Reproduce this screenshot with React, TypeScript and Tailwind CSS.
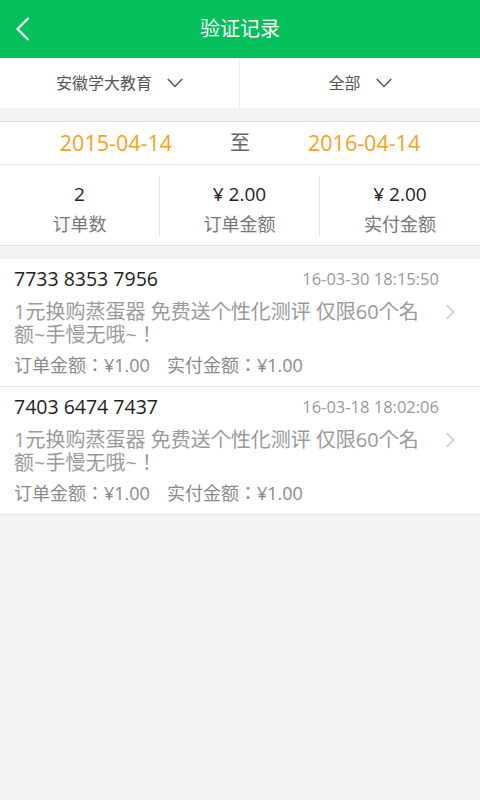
import React from "react";

const font = "font-['Open_Sans','Noto_Sans_CJK_SC',sans-serif]";
const fontJp = "font-['Open_Sans','Noto_Sans_CJK_JP',sans-serif]";

function Chevron() {
  return (
    <svg width="16" height="10" viewBox="0 0 16 10" className="shrink-0">
      <path d="M0.8 1 L8 8.5 L15.2 1" fill="none" stroke="#555" strokeWidth="1.5" />
    </svg>
  );
}

function Item({ no, time }: { no: string; time: string }) {
  return (
    <div className="bg-white h-[128px] pl-[14px] pt-[8px] border-b border-[#e6e6e6]">
      <div className="flex items-center justify-between pr-[41px] h-[24px]">
        <span className="text-[19.5px] text-[#222] leading-[24px]">{no}</span>
        <span className="text-[16.5px] text-[#999] leading-[24px]">{time}</span>
      </div>
      <div className="flex mt-[9px]">
        <div className={`w-[418px] text-[20px] leading-[23px] text-[#9a9a9a] ${fontJp}`}>
          1元换购蒸蛋器 免费送个性化测评 仅限60个名额~手慢无哦~！
        </div>
        <div className="pl-[13px] pt-[4px]">
          <svg width="10" height="16" viewBox="0 0 10 16">
            <path d="M1.5 1 L8.5 8 L1.5 15" fill="none" stroke="#c4c4c4" strokeWidth="1.3" />
          </svg>
        </div>
      </div>
      <div className={`mt-[8px] text-[18px] leading-[22px] text-[#8a8a8a] flex gap-[17px] ${fontJp}`}>
        <span>订单金额：¥1.00</span>
        <span>实付金额：¥1.00</span>
      </div>
    </div>
  );
}

export default function App() {
  return (
    <div className={`min-h-[800px] bg-[#f3f3f3] ${font}`}>
      <div className="h-[58px] bg-[#03c05b] grid grid-cols-[60px_1fr_60px] items-center">
        <div className="pl-[16px] flex items-center">
          <svg width="14" height="24" viewBox="0 0 14 24">
            <path d="M12.5 1 L1.5 12 L12.5 23" fill="none" stroke="#fff" strokeWidth="2.2" />
          </svg>
        </div>
        <div className="text-center text-white text-[20px] leading-[28px]">验证记录</div>
        <div />
      </div>

      <div className="h-[50px] bg-white grid grid-cols-2">
        <div className="flex items-center justify-center gap-[15px] border-r border-[#eeeeee]">
          <span className="text-[16px] text-[#555]">安徽学大教育</span>
          <Chevron />
        </div>
        <div className="flex items-center justify-center gap-[15px]">
          <span className="text-[16px] text-[#555]">全部</span>
          <Chevron />
        </div>
      </div>

      <div className="h-[13px]" />

      <div className="bg-white border-t border-b border-[#e2e2e2]">
        <div className="h-[43px] flex items-center justify-center gap-[58px] border-b border-[#e4e4e4]">
          <span className="text-[21.5px] text-[#f7a11a]">2015-04-14</span>
          <span className="text-[20px] text-[#666]">至</span>
          <span className="text-[21.5px] text-[#f7a11a]">2016-04-14</span>
        </div>
        <div className="h-[80px] grid grid-cols-3 py-[11px]">
          <div className="flex flex-col items-center border-r border-[#e4e4e4] pt-[6px]">
            <span className="text-[19px] leading-[24px] text-[#222]">2</span>
            <span className="text-[18px] leading-[24px] mt-[6px] text-[#777]">订单数</span>
          </div>
          <div className="flex flex-col items-center border-r border-[#e4e4e4] pt-[6px]">
            <span className="text-[19px] leading-[24px] text-[#222]">¥ 2.00</span>
            <span className="text-[18px] leading-[24px] mt-[6px] text-[#777]">订单金额</span>
          </div>
          <div className="flex flex-col items-center pt-[6px]">
            <span className="text-[19px] leading-[24px] text-[#222]">¥ 2.00</span>
            <span className="text-[18px] leading-[24px] mt-[6px] text-[#777]">实付金额</span>
          </div>
        </div>
      </div>

      <div className="h-[13px]" />

      <Item no="7733 8353 7956" time="16-03-30 18:15:50" />
      <Item no="7403 6474 7437" time="16-03-18 18:02:06" />
    </div>
  );
}
